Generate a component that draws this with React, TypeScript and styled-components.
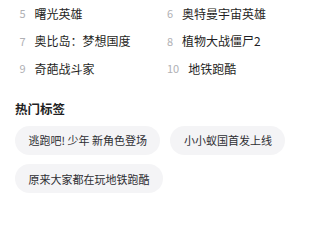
import React from "react";
import styled, { createGlobalStyle } from "styled-components";

const Global = createGlobalStyle`
  html, body { margin: 0; padding: 0; background: #fff; }
  body { font-family: "Noto Sans CJK SC", "Noto Sans", sans-serif; }
`;

const Page = styled.div`
  width: 320px;
  padding: 0 15px;
  box-sizing: border-box;
`;

const RankGrid = styled.ol`
  list-style: none;
  margin: 0;
  padding: 0;
  display: grid;
  grid-template-columns: 147.5px 1fr;
  grid-auto-rows: 27.5px;
`;

const RankItem = styled.li`
  display: flex;
  align-items: center;
  gap: 9px;
  padding-left: 4.5px;
`;

const RankNo = styled.span`
  font-size: 11px;
  color: #b0b0b4;
  line-height: 1;
`;

const RankName = styled.span`
  font-size: 12px;
  color: #1f1f24;
  line-height: 20px;
`;

const SectionTitle = styled.h3`
  margin: 16px 0 7px;
  font-size: 12.5px;
  font-weight: 700;
  line-height: 20px;
  color: #1f1f24;
`;

const TagWrap = styled.div`
  display: flex;
  flex-wrap: wrap;
  gap: 9.5px 10px;
`;

const Tag = styled.span`
  display: inline-flex;
  align-items: center;
  height: 29px;
  padding: 0 13.5px;
  border-radius: 15px;
  background: #f4f4f6;
  color: #2e2e33;
  font-size: 11px;
  white-space: pre;
`;

const ranks = [
  [5, "曙光英雄"],
  [6, "奥特曼宇宙英雄"],
  [7, "奥比岛：梦想国度"],
  [8, "植物大战僵尸2"],
  [9, "奇葩战斗家"],
  [10, "地铁跑酷"],
] as const;

const tags = ["逃跑吧! 少年 新角色登场", "小小蚁国首发上线", "原来大家都在玩地铁跑酷"];

export default function App() {
  return (
    <Page>
      <Global />
      <RankGrid>
        {ranks.map(([n, name]) => (
          <RankItem key={n}>
            <RankNo>{n}</RankNo>
            <RankName>{name}</RankName>
          </RankItem>
        ))}
      </RankGrid>
      <SectionTitle>热门标签</SectionTitle>
      <TagWrap>
        {tags.map((t) => (
          <Tag key={t}>{t}</Tag>
        ))}
      </TagWrap>
    </Page>
  );
}
